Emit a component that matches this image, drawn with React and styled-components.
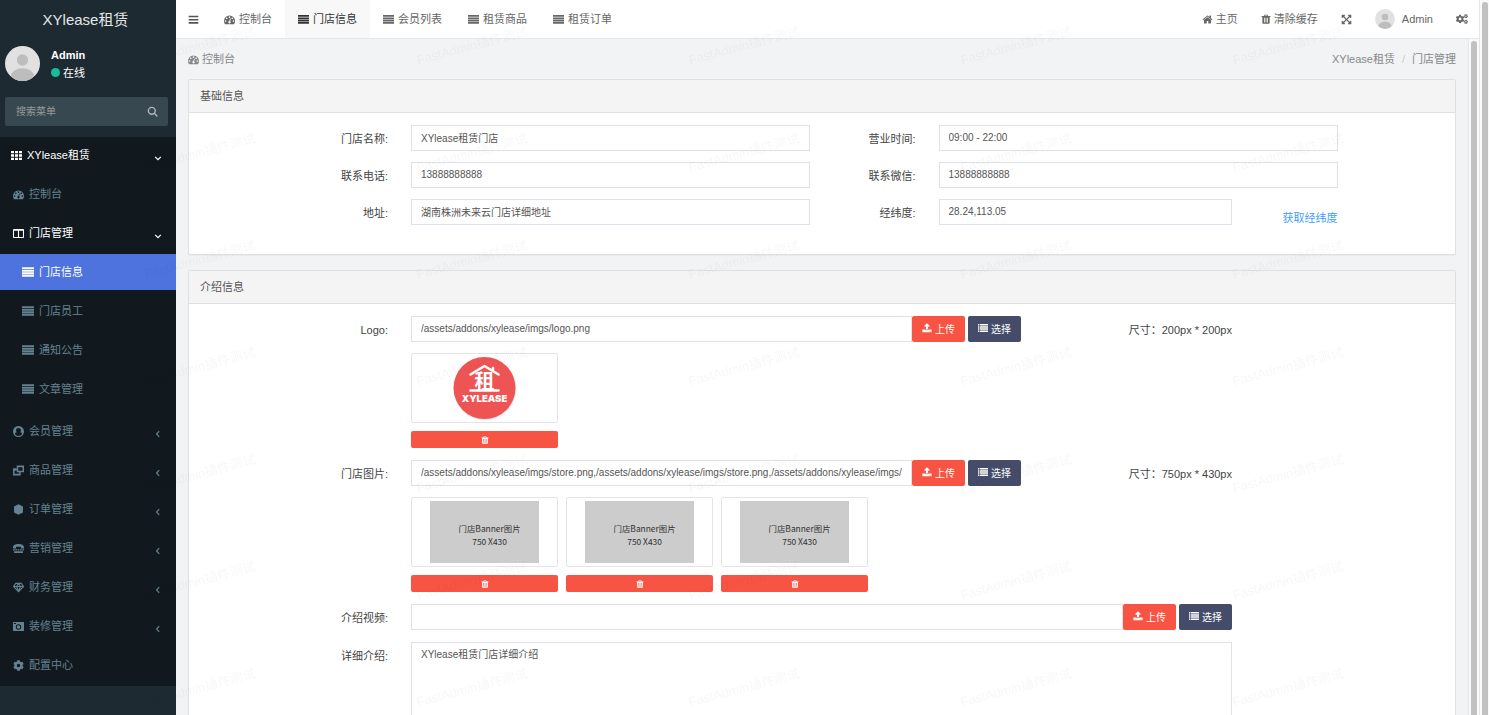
import React, { useState } from 'react';
import styled, { createGlobalStyle, ThemeProvider } from 'styled-components';
import { FaCog, FaCogs, FaExpandArrowsAlt } from 'react-icons/fa';

const theme = {
    primary: '#4e73df',
    danger: '#f75444',
    dark: '#444c69',
    sidebar: '#1e2a31',
    menu: '#12191e',
    menuText: '#648291',
    border: '#dfe0e4',
    inputBorder: '#dfe0e9',
};

const GlobalStyle = createGlobalStyle`
    * {
        box-sizing: border-box;
    }
    body {
        margin: 0;
        font-family: "Liberation Sans", "Noto Sans CJK SC", sans-serif;
        font-size: 11px;
        line-height: 16px;
        color: #555;
    }
    a {
        color: inherit;
        text-decoration: none;
    }
    button, input, textarea {
        font-family: inherit;
        font-size: inherit;
    }
`;

/* ---------- icons ---------- */

const Svg = styled.svg`
    flex: none;
    width: ${props => props.$size || 12}px;
    height: ${props => props.$size || 12}px;
    fill: currentColor;
`;

const Bars = ({ size }) => (
    <Svg viewBox="0 0 16 16" $size={size}><path d="M1 2.5h14v2.4H1zM1 7.1h14v2.4H1zM1 11.7h14v2.4H1z" /></Svg>
);

const Dashboard = ({ size }) => (
    <Svg viewBox="0 0 1792 1792" $size={size}>
        <path d="M384 1152q0-53-37.5-90.5t-90.5-37.5-90.5 37.5-37.5 90.5 37.5 90.5 90.5 37.5 90.5-37.5 37.5-90.5zm192-448q0-53-37.5-90.5t-90.5-37.5-90.5 37.5-37.5 90.5 37.5 90.5 90.5 37.5 90.5-37.5 37.5-90.5zm428 481l101-382q6-26-7.5-48.5t-38.5-29.5-48 6.5-30 39.5l-101 382q-60 5-107 43.5t-63 98.5q-20 77 20 146t117 89 146-20 89-117q16-60-6-117t-72-91zm660-33q0-53-37.5-90.5t-90.5-37.5-90.5 37.5-37.5 90.5 37.5 90.5 90.5 37.5 90.5-37.5 37.5-90.5zm-640-640q0-53-37.5-90.5t-90.5-37.5-90.5 37.5-37.5 90.5 37.5 90.5 90.5 37.5 90.5-37.5 37.5-90.5zm448 192q0-53-37.5-90.5t-90.5-37.5-90.5 37.5-37.5 90.5 37.5 90.5 90.5 37.5 90.5-37.5 37.5-90.5zm320 448q0 261-141 483-19 29-54 29h-1402q-35 0-54-29-141-221-141-483 0-182 71-348t191-286 286-191 348-71 348 71 286 191 191 286 71 348z" />
    </Svg>
);

const Justify = ({ size }) => (
    <Svg viewBox="0 0 16 16" $size={size}><path d="M0 1.6h16v2.5H0zM0 5h16v2.5H0zM0 8.4h16v2.5H0zM0 11.8h16v2.5H0z" /></Svg>
);

const Grid = ({ size }) => (
    <Svg viewBox="0 0 16 16" $size={size}>
        <path d="M0 1.5h4.4v3.4H0zM5.8 1.5h4.4v3.4H5.8zM11.6 1.5H16v3.4h-4.4zM0 6.3h4.4v3.4H0zM5.8 6.3h4.4v3.4H5.8zM11.6 6.3H16v3.4h-4.4zM0 11.1h4.4v3.4H0zM5.8 11.1h4.4v3.4H5.8zM11.6 11.1H16v3.4h-4.4z" />
    </Svg>
);

const Columns = ({ size }) => (
    <Svg viewBox="0 0 16 16" $size={size}>
        <path fillRule="evenodd" d="M1.2 1.5h13.6q1.2 0 1.2 1.2v10.6q0 1.2-1.2 1.2H1.2Q0 14.5 0 13.3V2.7Q0 1.5 1.2 1.5zM1.5 4v9h5.7V4zM8.8 4v9h5.7V4z" />
    </Svg>
);

const User = ({ size }) => (
    <Svg viewBox="0 0 16 16" $size={size}>
        <path fillRule="evenodd" d="M8 0a8 8 0 1 1 0 16A8 8 0 0 1 8 0zM8 3C5.7 3 4.4 4.4 4.4 6.4c0 1.2.5 2.1 1.2 2.7-1.5.2-2.5 1.1-2.9 2.7A6.5 6.5 0 0 0 8 14.5a6.5 6.5 0 0 0 5.3-2.7c-.4-1.6-1.4-2.5-2.9-2.7.7-.6 1.2-1.5 1.2-2.7C11.6 4.4 10.3 3 8 3z" />
    </Svg>
);

const Ungroup = ({ size }) => (
    <Svg viewBox="0 0 16 16" $size={size}>
        <path d="M6.5 2H15v7.5H6.5zM1.2 6.5h5.3M1.2 6.5V14H10V9.5" fill="none" stroke="currentColor" strokeWidth="2.2" />
        <path d="M0 4.8h4v3.6H0z" />
    </Svg>
);

const Hexagon = ({ size }) => (
    <Svg viewBox="0 0 16 16" $size={size}><path d="M8 .5l6.5 3v9l-6.5 3-6.5-3v-9z" /></Svg>
);

const Tty = ({ size }) => (
    <Svg viewBox="0 0 16 16" $size={size}>
        <path d="M0 6.5C0 3 3.5 1.5 8 1.5S16 3 16 6.5V8h-4.500V5.500h-7V8H0zM0 9h2.500v2H0zM3.400 9h2.500v2H3.400zM6.800 9h2.500v2H6.800zM10.200 9h2.500v2h-2.500zM13.500 9H16v2h-2.500zM1.500 12h13v2.500h-13z" />
    </Svg>
);

const Diamond = ({ size }) => (
    <Svg viewBox="0 0 16 16" $size={size}>
        <path d="M4 2h8l3.2 4.5L8 14.3.8 6.5zM1 6.5h14M5.2 6.5L8 13.5l2.8-7M5.2 6.5L8 2l2.800 4.500" fill="none" stroke="currentColor" strokeWidth="1.5" />
    </Svg>
);

const Camera = ({ size }) => (
    <Svg viewBox="0 0 16 16" $size={size}>
        <path fillRule="evenodd" d="M0 1.5h16v13H0zM1.3 3v1.500h3V3zM8 4.800a4 4 0 1 0 0 8 4 4 0 0 0 0-8zm0 1.400a2.600 2.600 0 1 1 0 5.200 2.600 2.600 0 0 1 0-5.200z" />
    </Svg>
);

const Home = ({ size }) => (
    <Svg viewBox="0 0 1792 1792" $size={size}>
        <path d="M1472 992v480q0 26-19 45t-45 19h-384v-384h-256v384h-384q-26 0-45-19t-19-45v-480q0-1 .5-3t.5-3l575-474 575 474q1 2 1 6zm223-69l-62 74q-8 9-21 11h-3q-13 0-21-7l-692-577-692 577q-12 8-24 7-13-2-21-11l-62-74q-8-10-7-23.5t11-21.5l719-599q32-26 76-26t76 26l244 204v-195q0-14 9-23t23-9h192q14 0 23 9t9 23v408l219 182q10 8 11 21.5t-7 23.5z" />
    </Svg>
);

const Trash = ({ size }) => (
    <Svg viewBox="0 0 16 16" $size={size}>
        <path fillRule="evenodd" d="M5.5 1h5l.8 2H15v1.6h-1.2V14q0 1.5-1.3 1.5h-9Q2.2 15.5 2.2 14V4.6H1V3h3.7zM6.3 2.2L6 3h4l-.3-.8zM4.9 6v7.5h1.2V6zM7.4 6v7.5h1.2V6zM9.9 6v7.5h1.2V6z" />
    </Svg>
);

const Upload = ({ size }) => (
    <Svg viewBox="0 0 1792 1792" $size={size}>
        <path d="M1344 1472q0-26-19-45t-45-19-45 19-19 45 19 45 45 19 45-19 19-45zm256 0q0-26-19-45t-45-19-45 19-19 45 19 45 45 19 45-19 19-45zm128-224v320q0 40-28 68t-68 28h-1472q-40 0-68-28t-28-68v-320q0-40 28-68t68-28h427q21 56 70.5 92t110.5 36h256q61 0 110.5-36t70.5-92h427q40 0 68 28t28 68zm-325-648q-17 40-59 40h-256v448q0 26-19 45t-45 19h-256q-26 0-45-19t-19-45v-448h-256q-42 0-59-40-17-39 14-69l448-448q18-19 45-19t45 19l448 448q31 30 14 69z" />
    </Svg>
);

const List = ({ size }) => (
    <Svg viewBox="0 0 16 16" $size={size}>
        <path d="M0 1.6h2.2v2.4H0zM3.2 1.6H16v2.4H3.2zM0 5h2.2v2.4H0zM3.2 5H16v2.4H3.2zM0 8.4h2.2v2.4H0zM3.2 8.4H16v2.4H3.2zM0 11.8h2.2v2.4H0zM3.2 11.8H16v2.4H3.2z" />
    </Svg>
);

const Search = ({ size }) => (
    <Svg viewBox="0 0 16 16" $size={size}>
        <path d="M12 7a5 5 0 1 1-10 0 5 5 0 0 1 10 0zM11 11l3.5 3.5" fill="none" stroke="currentColor" strokeWidth="2" strokeLinecap="round" />
    </Svg>
);

const Angle = ({ open }) => (
    <Svg viewBox="0 0 8 8" $size={8}>
        <path d={open ? 'M1.2 2.8L4 5.6l2.8-2.8' : 'M5.2 1.2L2.6 4l2.6 2.8'} fill="none" stroke="currentColor" strokeWidth="1.2" />
    </Svg>
);

const Avatar = ({ size }) => (
    <Svg viewBox="0 0 40 40" $size={size}>
        <clipPath id={`face${size}`}><circle cx="20" cy="20" r="20" /></clipPath>
        <g clipPath={`url(#face${size})`}>
            <path fill="#e1e1e1" d="M0 0h40v40H0z" />
            <circle cx="20" cy="16" r="6.5" fill="#bdbdbd" />
            <ellipse cx="20" cy="34" rx="13" ry="8.5" fill="#bdbdbd" />
        </g>
    </Svg>
);

/* ---------- layout ---------- */

const Page = styled.div`
    display: flex;
    height: 100vh;
    overflow: hidden;
`;

const Sidebar = styled.aside`
    flex: none;
    width: 176px;
    background-color: ${props => props.theme.sidebar};
    color: #fff;
`;

const Brand = styled.a`
    display: block;
    height: 38px;
    padding-right: 5px;
    font-size: 15px;
    line-height: 39px;
    text-align: center;
    color: #e4e7e9;
`;

const UserPanel = styled.div`
    display: flex;
    align-items: center;
    gap: 11px;
    padding: 8px 5px 16px;
`;

const UserName = styled.p`
    margin: 0 0 2px;
    font-weight: bold;
`;

const Status = styled.span`
    display: flex;
    align-items: center;
    gap: 3px;

    &::before {
        content: '';
        width: 9px;
        height: 9px;
        border-radius: 50%;
        background-color: #18bc9c;
    }
`;

const SearchForm = styled.form`
    display: flex;
    height: 29px;
    margin: 0 8px 11px 5px;
    border-radius: 2px;
    background-color: #374850;
`;

const SearchInput = styled.input`
    flex: 1;
    min-width: 0;
    padding: 0 11px;
    border: 0;
    background: transparent;
    color: #fff;
    font-size: 10px;

    &::placeholder {
        color: #999;
    }
`;

const SearchButton = styled.button`
    display: flex;
    align-items: center;
    padding: 0 10px;
    border: 0;
    background: transparent;
    color: #b0b6ba;
`;

const Menu = styled.ul`
    display: flex;
    flex-direction: column;
    gap: 3px;
    margin: 0;
    padding: 0 0 3px;
    list-style: none;
    background-color: ${props => props.theme.menu};

    & & {
        padding-top: 3px;
    }
`;

const MenuLink = styled.a`
    display: flex;
    align-items: center;
    gap: 5px;
    height: 36px;
    padding: 0 14px 0 ${props => [11, 13, 22][props.$level]}px;
    background-color: ${props => props.$active ? props.theme.primary : 'transparent'};
    color: ${props => props.$active || props.$open ? '#fff' : props.theme.menuText};

    &:hover {
        color: #fff;
    }
`;

const Caret = styled.span`
    display: flex;
    margin-left: auto;
    padding-top: 6px;
`;

const Main = styled.div`
    display: flex;
    flex: 1;
    flex-direction: column;
    min-width: 0;
    background-color: #f1f3f5;
`;

const Topbar = styled.header`
    display: flex;
    flex: none;
    justify-content: space-between;
    height: 39px;
    padding-right: 11px;
    border-bottom: 1px solid #e4e6e8;
    background-color: #fff;
`;

const Nav = styled.nav`
    display: flex;
`;

const Toggle = styled.button`
    display: flex;
    align-items: center;
    width: 35px;
    padding: 0 0 0 12px;
    border: 0;
    background: transparent;
    color: #555;
`;

const Tab = styled.a`
    display: flex;
    align-items: center;
    gap: 4px;
    padding: 0 13px;
    background-color: ${props => props.$active ? '#f8f8f8' : 'transparent'};
    color: ${props => props.$active ? '#333' : '#666'};
`;

const Tools = styled.div`
    display: flex;
    align-items: center;
    gap: 23px;
    color: #666;
`;

const ToolLink = styled.a`
    display: flex;
    align-items: center;
    gap: ${props => props.$gap || 3}px;
`;

const Body = styled.div`
    display: flex;
    flex: 1;
    min-height: 0;
`;

const Content = styled.main`
    flex: 1;
    min-width: 0;
    padding: 12px;
    overflow: hidden;
`;

const Crumbs = styled.div`
    display: flex;
    justify-content: space-between;
    margin-bottom: 12px;
    color: #888;
`;

const Crumb = styled.span`
    display: flex;
    align-items: center;
    gap: ${props => props.$gap}px;
`;

const Slash = styled.span`
    color: #ccc;
`;

const ScrollTrack = styled.div`
    flex: none;
    width: ${props => props.$outer ? 10 : 11}px;
    padding: 2px ${props => props.$outer ? 1 : 2}px 0 2px;
    border-left: 1px solid #e6e6e8;
    background-color: #fafafa;
`;

const ScrollThumb = styled.div`
    height: 100%;
    border-radius: 4px 4px 0 0;
    background-color: #c1c1c1;
`;

const Panel = styled.section`
    margin-bottom: 15px;
    border: 1px solid ${props => props.theme.border};
    border-radius: 2px;
    background-color: #fff;
    box-shadow: 0 1px 1px rgba(0, 0, 0, .04);
`;

const PanelHeading = styled.h3`
    margin: 0;
    padding: 8px 11px;
    border-bottom: 1px solid ${props => props.theme.border};
    background-color: #f4f4f4;
    font-size: 11px;
    font-weight: normal;
    line-height: 16px;
`;

const PanelForm = styled.form`
    display: grid;
    gap: ${props => props.$gap}px;
    padding: 12px 0 ${props => props.$bottom}px;
`;

const Row = styled.div`
    display: grid;
    grid-template-columns: repeat(12, 1fr);
`;

const Col = styled.div`
    grid-column: span ${props => props.$span};
    min-width: 0;
    padding: 0 12px 0 11px;
`;

const Label = styled.label`
    grid-column: span ${props => props.$span || 2};
    padding: 6px 12px 0 0;
    text-align: right;
    color: #444;
`;

const Note = styled.p`
    grid-column: span 2;
    margin: 0;
    padding: 6px 12px 0 0;
    text-align: right;
    color: #444;
`;

const FetchLink = styled.a`
    grid-column: span 1;
    padding: 11px 12px 0 0;
    text-align: right;
    color: #409eff;
    white-space: nowrap;
`;

const Input = styled.input`
    display: block;
    width: 100%;
    height: 26px;
    padding: 0 9px 1px;
    border: 1px solid ${props => props.theme.inputBorder};
    border-radius: 0;
    background-color: #fff;
    color: #555;
    font-size: 10px;
`;

const Textarea = styled.textarea`
    display: block;
    width: 100%;
    height: 120px;
    padding: 4px 9px;
    border: 1px solid ${props => props.theme.inputBorder};
    color: #555;
    font-size: 10px;
    line-height: 16px;
    resize: none;
`;

const InputGroup = styled.div`
    display: flex;

    ${Input} {
        flex: 1;
        min-width: 0;
    }
`;

const Button = styled.button`
    display: flex;
    flex: none;
    align-items: center;
    justify-content: center;
    gap: 3px;
    height: 26px;
    margin-left: ${props => props.$kind === 'dark' ? 3 : 0}px;
    padding: 0 10px 2px;
    border: 0;
    border-radius: 2px;
    background-color: ${props => props.theme[props.$kind]};
    color: #fff;
    font-size: 10px;
`;

const Previews = styled.ul`
    display: flex;
    gap: 8px;
    margin: 11px 0 0;
    padding: 0;
    list-style: none;
`;

const Preview = styled.li`
    width: 147px;
`;

const Thumb = styled.div`
    display: flex;
    align-items: center;
    justify-content: center;
    height: 70px;
    margin-bottom: 8px;
    border: 1px solid #e4e4e4;
    border-radius: 2px;
`;

const DeleteButton = styled(Button)`
    width: 100%;
    height: 17px;
    margin-left: 0;
    padding: 0;
`;

const Watermark = styled.div`
    position: fixed;
    inset: -8px 0 0 0;
    display: grid;
    grid-template-columns: repeat(5, 272px);
    grid-auto-rows: 107px;
    place-items: center;
    padding-left: 64px;
    overflow: hidden;
    color: rgba(0, 0, 0, .035);
    font-size: 13px;
    white-space: nowrap;
    pointer-events: none;

    span {
        transform: rotate(-15deg);
    }
`;

/* ---------- pictures ---------- */

const LogoImage = () => (
    <svg width="66" height="66" viewBox="0 0 66 66">
        <circle cx="33" cy="34" r="31.5" fill="#000" opacity=".08" />
        <circle cx="32.500" cy="33" r="31" fill="#ef5455" />
        <path d="M18.500 19.500L32.500 11l14 8.500M41 16V13" fill="none" stroke="#fff" strokeWidth="2.600" strokeLinecap="round" strokeLinejoin="round" />
        <path d="M18.500 35.500h28" stroke="#fff" strokeWidth="2.400" strokeLinecap="round" />
        <text x="32.500" y="34" textAnchor="middle" fill="#fff" fontFamily="Noto Sans CJK SC, sans-serif" fontWeight="bold" fontSize="20">租</text>
        <text x="32.500" y="47" textAnchor="middle" fill="#fff" fontFamily="Inter, sans-serif" fontWeight="900" fontSize="9.500">XYLEASE</text>
    </svg>
);

const BannerImage = () => (
    <svg width="109" height="62" viewBox="0 0 750 430" preserveAspectRatio="xMidYMid slice">
        <path fill="#ccc" d="M0 0h750v430H0z" />
        <g fill="#333" fontFamily="Noto Sans CJK SC, sans-serif" fontSize="58" textAnchor="middle">
            <text x="410" y="214">门店Banner图片</text>
            <text x="410" y="304">750 X430</text>
        </g>
    </svg>
);

/* ---------- data ---------- */

const MENU = [
    { text: 'XYlease租赁', icon: Grid, level: 0, open: true },
    { text: '控制台', icon: Dashboard, level: 1 },
    { text: '门店管理', icon: Columns, level: 1, open: true, children: ['门店信息', '门店员工', '通知公告', '文章管理'] },
    { text: '会员管理', icon: User, level: 1, open: false },
    { text: '商品管理', icon: Ungroup, level: 1, open: false },
    { text: '订单管理', icon: Hexagon, level: 1, open: false },
    { text: '营销管理', icon: Tty, level: 1, open: false },
    { text: '财务管理', icon: Diamond, level: 1, open: false },
    { text: '装修管理', icon: Camera, level: 1, open: false },
    { text: '配置中心', icon: FaCog, level: 1 },
];

const TABS = ['控制台', '门店信息', '会员列表', '租赁商品', '租赁订单'];

const STORE_IMAGES = Array(3).fill('/assets/addons/xylease/imgs/store.png').join(',');

const UploadField = ({ id, value }) => (
    <InputGroup>
        <Input id={id} defaultValue={value} />
        <Button type="button" $kind="danger"><Upload size={10} />上传</Button>
        <Button type="button" $kind="dark"><List size={10} />选择</Button>
    </InputGroup>
);

const PreviewItem = ({ children }) => (
    <Preview>
        <Thumb>{children}</Thumb>
        <DeleteButton type="button" $kind="danger" aria-label="删除"><Trash size={8} /></DeleteButton>
    </Preview>
);

const SideMenu = () => {
    const [current, setCurrent] = useState('门店信息');

    return (
        <Menu>
            {MENU.map(({ text, icon: Icon, level, open, children }) => (
                <li key={text}>
                    <MenuLink href="#" $level={level} $open={open}>
                        <Icon size={11} />
                        {text}
                        {open !== undefined && <Caret><Angle open={open} /></Caret>}
                    </MenuLink>
                    {children && <Menu>
                        {children.map(child => (
                            <li key={child}>
                                <MenuLink href="#" $level={2} $active={child === current} onClick={() => setCurrent(child)}>
                                    <Justify size={12} />{child}
                                </MenuLink>
                            </li>
                        ))}
                    </Menu>}
                </li>
            ))}
        </Menu>
    );
};

const App = () => (
    <ThemeProvider theme={theme}>
        <GlobalStyle />
        <Page>
            <Sidebar>
                <Brand href="#">XYlease租赁</Brand>
                <UserPanel>
                    <Avatar size={35} />
                    <div>
                        <UserName>Admin</UserName>
                        <Status>在线</Status>
                    </div>
                </UserPanel>
                <SearchForm>
                    <SearchInput placeholder="搜索菜单" aria-label="搜索菜单" />
                    <SearchButton type="button" aria-label="搜索"><Search size={11} /></SearchButton>
                </SearchForm>
                <SideMenu />
            </Sidebar>
            <Main>
                <Topbar>
                    <Nav>
                        <Toggle aria-label="菜单"><Bars size={11} /></Toggle>
                        {TABS.map((tab, index) => (
                            <Tab href="#" key={tab} $active={index === 1}>
                                {index === 0 ? <Dashboard size={11} /> : <Justify size={11} />}
                                {tab}
                            </Tab>
                        ))}
                    </Nav>
                    <Tools>
                        <ToolLink href="#"><Home size={11} />主页</ToolLink>
                        <ToolLink href="#"><Trash size={10} />清除缓存</ToolLink>
                        <ToolLink href="#" aria-label="全屏"><FaExpandArrowsAlt size={11} /></ToolLink>
                        <ToolLink href="#" $gap={7}><Avatar size={20} />Admin</ToolLink>
                        <ToolLink href="#" aria-label="设置"><FaCogs size={12} /></ToolLink>
                    </Tools>
                </Topbar>
                <Body>
                    <Content>
                        <Crumbs>
                            <Crumb $gap={3}><Dashboard size={11} />控制台</Crumb>
                            <Crumb $gap={7}><a href="#">XYlease租赁</a><Slash>/</Slash><a href="#">门店管理</a></Crumb>
                        </Crumbs>
                        <Panel>
                            <PanelHeading>基础信息</PanelHeading>
                            <PanelForm $gap={11} $bottom={28}>
                                <Row>
                                    <Label htmlFor="name">门店名称:</Label>
                                    <Col $span={4}><Input id="name" defaultValue="XYlease租赁门店" /></Col>
                                    <Label htmlFor="hours" $span={1}>营业时间:</Label>
                                    <Col $span={4}><Input id="hours" defaultValue="09:00 - 22:00" /></Col>
                                </Row>
                                <Row>
                                    <Label htmlFor="phone">联系电话:</Label>
                                    <Col $span={4}><Input id="phone" defaultValue="13888888888" /></Col>
                                    <Label htmlFor="wechat" $span={1}>联系微信:</Label>
                                    <Col $span={4}><Input id="wechat" defaultValue="13888888888" /></Col>
                                </Row>
                                <Row>
                                    <Label htmlFor="address">地址:</Label>
                                    <Col $span={4}><Input id="address" defaultValue="湖南株洲未来云门店详细地址" /></Col>
                                    <Label htmlFor="location" $span={1}>经纬度:</Label>
                                    <Col $span={3}><Input id="location" defaultValue="28.24,113.05" /></Col>
                                    <FetchLink href="#">获取经纬度</FetchLink>
                                </Row>
                            </PanelForm>
                        </Panel>
                        <Panel>
                            <PanelHeading>介绍信息</PanelHeading>
                            <PanelForm $gap={12} $bottom={12}>
                                <Row>
                                    <Label htmlFor="logo">Logo:</Label>
                                    <Col $span={6}>
                                        <UploadField id="logo" value="/assets/addons/xylease/imgs/logo.png" />
                                        <Previews>
                                            <PreviewItem><LogoImage /></PreviewItem>
                                        </Previews>
                                    </Col>
                                    <Note>尺寸：200px * 200px</Note>
                                </Row>
                                <Row>
                                    <Label htmlFor="images">门店图片:</Label>
                                    <Col $span={6}>
                                        <UploadField id="images" value={STORE_IMAGES} />
                                        <Previews>
                                            <PreviewItem><BannerImage /></PreviewItem>
                                            <PreviewItem><BannerImage /></PreviewItem>
                                            <PreviewItem><BannerImage /></PreviewItem>
                                        </Previews>
                                    </Col>
                                    <Note>尺寸：750px * 430px</Note>
                                </Row>
                                <Row>
                                    <Label htmlFor="video">介绍视频:</Label>
                                    <Col $span={8}><UploadField id="video" value="" /></Col>
                                </Row>
                                <Row>
                                    <Label htmlFor="detail">详细介绍:</Label>
                                    <Col $span={8}><Textarea id="detail" defaultValue="XYlease租赁门店详细介绍" /></Col>
                                </Row>
                            </PanelForm>
                        </Panel>
                    </Content>
                    <ScrollTrack><ScrollThumb /></ScrollTrack>
                </Body>
            </Main>
            <ScrollTrack $outer><ScrollThumb /></ScrollTrack>
        </Page>
        <Watermark aria-hidden="true">
            {Array.from({ length: 35 }, (_, index) => <span key={index}>FastAdmin插件测试</span>)}
        </Watermark>
    </ThemeProvider>
);

export default App;
